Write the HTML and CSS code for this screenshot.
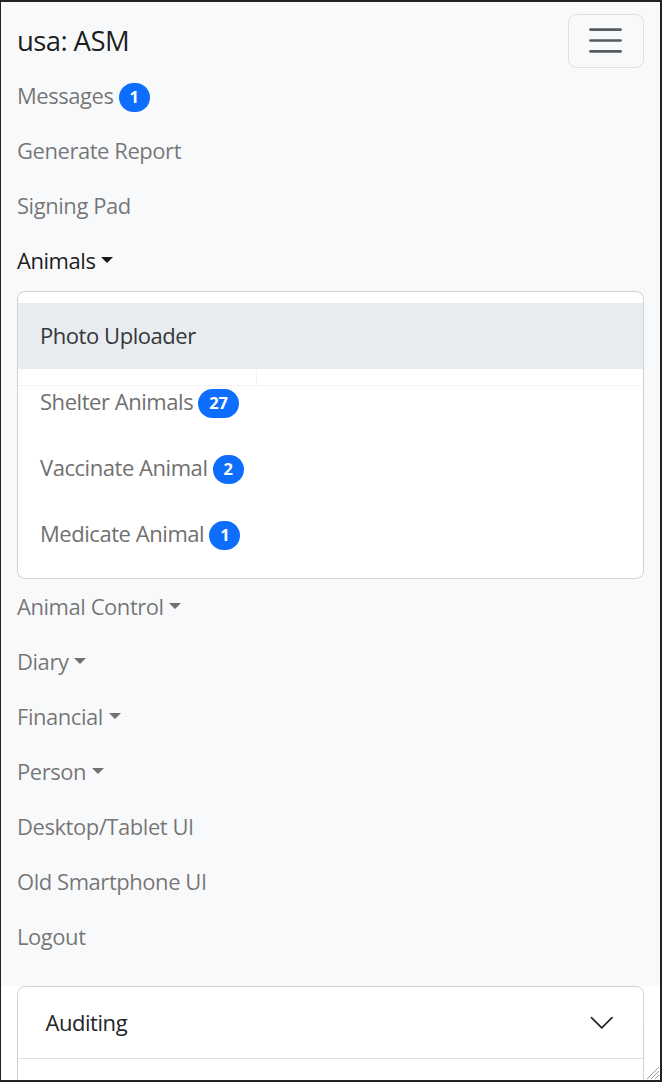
FILE: index.html
```html
<!DOCTYPE html>
<html lang="en">
<head>
<meta charset="utf-8">
<title>usa: ASM</title>
<link rel="stylesheet" href="styles.css">
</head>
<body>
<div class="frame">
  <nav class="navbar">
    <div class="navbar-top">
      <a class="brand" href="#">usa: ASM</a>
      <button class="toggler" type="button" aria-label="Toggle navigation">
        <svg class="toggler-icon" viewBox="0 0 30 30" xmlns="http://www.w3.org/2000/svg"><path d="M4 7h22M4 15h22M4 23h22" stroke="rgba(33,37,41,0.75)" stroke-width="2" stroke-linecap="round" stroke-miterlimit="10"/></svg>
      </button>
    </div>
    <ul class="navbar-nav">
      <li><a class="nav-link" href="#">Messages <span class="badge">1</span></a></li>
      <li><a class="nav-link" href="#">Generate Report</a></li>
      <li><a class="nav-link" href="#">Signing Pad</a></li>
      <li class="dropdown">
        <a class="nav-link show caret" href="#">Animals</a>
        <ul class="dropdown-menu">
          <li><a class="dropdown-item active" href="#">Photo Uploader</a></li>
          <li class="item-strip">
            <a class="dropdown-item" href="#">Shelter Animals <span class="badge">27</span></a>
            <span class="strip"><span class="strip-cell"></span></span>
          </li>
          <li><a class="dropdown-item" href="#">Vaccinate Animal <span class="badge">2</span></a></li>
          <li><a class="dropdown-item" href="#">Medicate Animal <span class="badge">1</span></a></li>
        </ul>
      </li>
      <li><a class="nav-link caret" href="#">Animal Control</a></li>
      <li><a class="nav-link caret" href="#">Diary</a></li>
      <li><a class="nav-link caret" href="#">Financial</a></li>
      <li><a class="nav-link caret" href="#">Person</a></li>
      <li><a class="nav-link" href="#">Desktop/Tablet UI</a></li>
      <li><a class="nav-link" href="#">Old Smartphone UI</a></li>
      <li><a class="nav-link" href="#">Logout</a></li>
    </ul>
  </nav>
  <div class="content">
    <div class="accordion">
      <div class="acc-item">
        <button class="acc-button" type="button">
          <span>Auditing</span>
          <svg class="acc-icon" viewBox="0 0 16 16" xmlns="http://www.w3.org/2000/svg" fill="none" stroke="#212529" stroke-linecap="round" stroke-linejoin="round"><path d="M2 5L8 11L14 5"/></svg>
        </button>
      </div>
      <div class="acc-item acc-next"></div>
    </div>
  </div>
  <svg class="grip" viewBox="0 0 16 16" xmlns="http://www.w3.org/2000/svg"><path d="M15 3L3 15M15 7L7 15M15 11L11 15" stroke="#9a9a9a" stroke-width="1"/></svg>
</div>
</body>
</html>
```

FILE: styles.css
```css
* { box-sizing: border-box; }

html, body {
  margin: 0;
  padding: 0;
  background: #222;
}

body {
  font-family: "Open Sans", "Noto Sans", sans-serif;
  font-size: 22px;
  line-height: 1.5;
  color: #212529;
}

.frame {
  position: relative;
  width: 662px;
  height: 1082px;
  overflow: hidden;
  background: #fff;
  border-top: 2px solid #222;
  border-left: 1px solid #222;
  border-right: 2px solid #222;
  border-bottom: 2px solid #222;
}

a { text-decoration: none; }

.navbar {
  background: #f8f9fa;
  padding: 11px 16.5px 11px 16px;
}

.navbar-top {
  display: flex;
  align-items: center;
  justify-content: space-between;
}

.brand {
  font-size: 27.5px;
  line-height: 1.5;
  padding: 6.9px 0;
  color: rgba(0, 0, 0, 0.9);
  letter-spacing: -0.6px;
}

.toggler {
  display: flex;
  align-items: center;
  justify-content: center;
  width: 76px;
  height: 54px;
  padding: 0;
  background: transparent;
  border: 1px solid rgba(0, 0, 0, 0.1);
  border-radius: 8.25px;
}

.toggler-icon {
  width: 41px;
  height: 41px;
}

.navbar-nav {
  list-style: none;
  margin: 0 0 11px;
  padding: 0;
}

.nav-link {
  display: block;
  padding: 11px 0;
  line-height: 33px;
  color: rgba(0, 0, 0, 0.55);
  letter-spacing: -0.45px;
}

.nav-link.show { color: rgba(0, 0, 0, 0.9); }

.caret::after {
  content: "";
  display: inline-block;
  margin-left: 5.6px;
  vertical-align: 5.6px;
  border-top: 6.6px solid;
  border-right: 6.6px solid transparent;
  border-left: 6.6px solid transparent;
  border-bottom: 0;
}

.badge {
  display: inline-block;
  padding: 6px 10.7px;
  font-size: 16.5px;
  font-weight: 700;
  line-height: 1;
  letter-spacing: 0;
  color: #fff;
  background: #0d6efd;
  border-radius: 50rem;
  text-align: center;
  vertical-align: 1px;
}

.dropdown-menu {
  list-style: none;
  margin: 2.75px 0 0;
  padding: 11px 0;
  background: #fff;
  border: 1px solid rgba(0, 0, 0, 0.175);
  border-radius: 8.25px;
}

.dropdown-item {
  display: block;
  padding: 16.5px 22px;
  line-height: 33px;
  color: #707070;
  letter-spacing: -0.45px;
}

.dropdown-item.active {
  background: #e9ecef;
  color: #33373a;
}

.item-strip { position: relative; }

.strip {
  position: absolute;
  left: 0;
  right: 0;
  top: 0;
  height: 17px;
  border-bottom: 1px solid #f2f3f4;
  pointer-events: none;
}

.strip-cell {
  display: block;
  width: 239px;
  height: 100%;
  border-right: 1px solid #f2f3f4;
}

.content {
  padding: 0 16.5px 0 16px;
}

.accordion {
  border: 1px solid rgba(0, 0, 0, 0.175);
  border-radius: 8.25px 8.25px 0 0;
  border-bottom: 0;
  overflow: hidden;
}

.acc-item { background: #fff; }

.acc-button {
  display: flex;
  align-items: center;
  justify-content: space-between;
  width: 100%;
  height: 72px;
  padding: 0 27.5px;
  background: #fff;
  border: 0;
  border-bottom: 1px solid #dee2e6;
  font-family: inherit;
  font-size: 22px;
  line-height: 33px;
  color: #212529;
  letter-spacing: -0.45px;
  text-align: left;
}

.acc-icon {
  width: 27.5px;
  height: 27.5px;
}

.acc-next { height: 40px; }

.grip {
  position: absolute;
  right: 0;
  bottom: 0;
  width: 16px;
  height: 16px;
}
```
